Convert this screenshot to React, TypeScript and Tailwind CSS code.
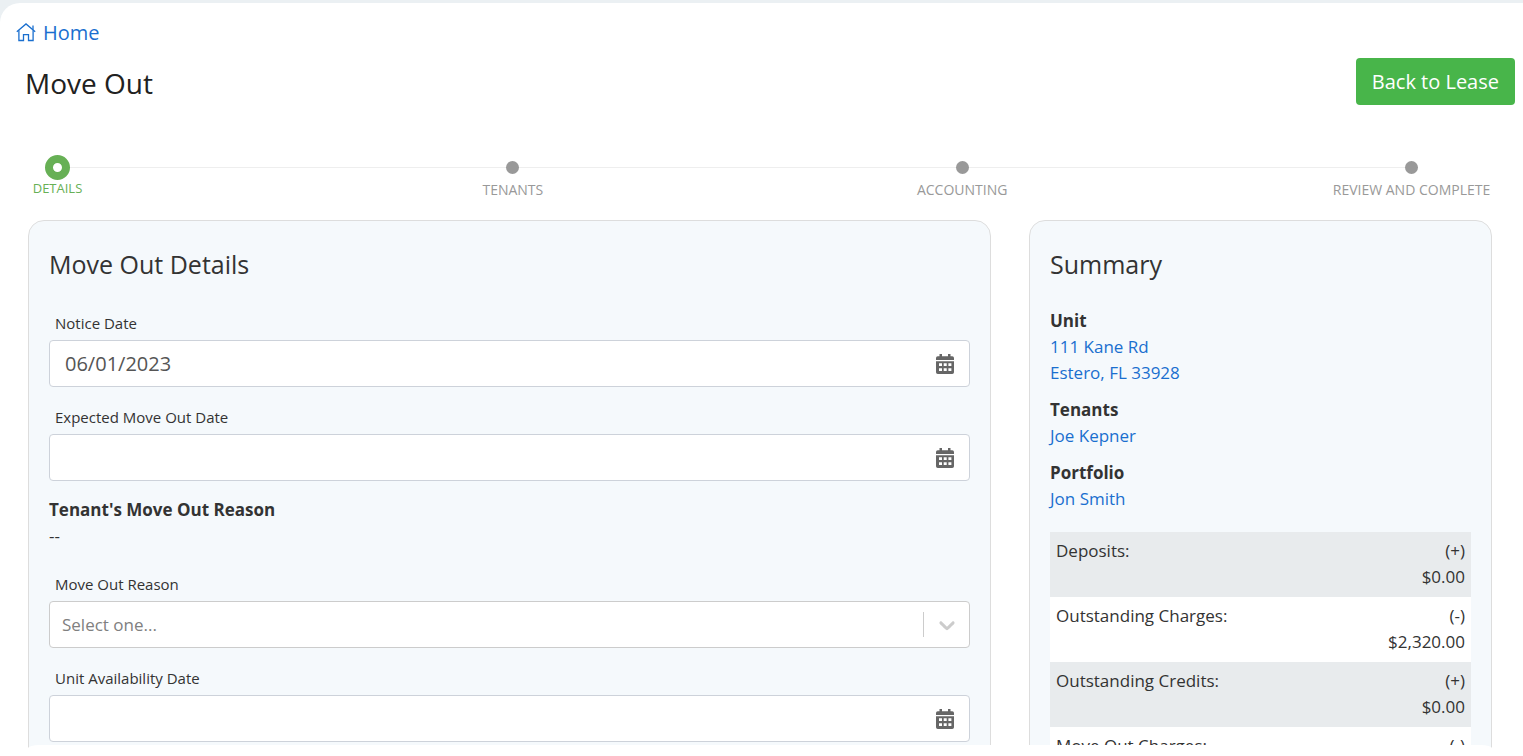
import { FC, Fragment, ReactNode } from "react";

interface FieldProps {
  id: string;
  label: string;
  value?: string;
}

interface ItemProps {
  title: string;
  children: ReactNode;
}

const steps = ["Tenants", "Accounting", "Review and Complete"];

const rows = [
  { label: "Deposits:", sign: "(+)", amount: "$0.00" },
  { label: "Outstanding Charges:", sign: "(-)", amount: "$2,320.00" },
  { label: "Outstanding Credits:", sign: "(+)", amount: "$0.00" },
  { label: "Move Out Charges:", sign: "(-)", amount: "$0.00" },
];

const HomeIcon: FC = () => (
  <svg className="w-5 h-5" viewBox="0 0 20 20" fill="none" stroke="currentColor" strokeWidth="1.3">
    <path d="M0.8 8.7 10 0.9 19.2 8.7" />
    <path d="M17 6.8V2.5" />
    <path d="M2.9 7.2V17.5H7.5V11.6H12.5V17.5H17.1V7.2" />
  </svg>
);

const CalendarIcon: FC = () => (
  <svg className="w-[18px] h-5" viewBox="0 0 18 20" fill="#666">
    <path
      fillRule="evenodd"
      d="M3.5 0H6v2.3h6V0h2.5v2.3h1.7A1.8 1.8 0 0 1 18 4.1V6H0V4.1A1.8 1.8 0 0 1 1.8 2.3h1.7zM0 7.2h18v11a1.8 1.8 0 0 1-1.8 1.8H1.8A1.8 1.8 0 0 1 0 18.2zM3 9.2v2.8h3V9.2zM7.7 9.2v2.8h3V9.2zM12.4 9.2v2.8h3V9.2zM3 14.2v2.8h3v-2.8zM7.7 14.2v2.8h3v-2.8zM12.4 14.2v2.8h3v-2.8z"
    />
  </svg>
);

const Chevron: FC = () => (
  <svg className="w-[26px] h-[26px]" viewBox="0 0 20 20" fill="#ccc">
    <path d="M4.516 7.548c0.436-0.446 1.043-0.481 1.576 0l3.908 3.747 3.908-3.747c0.533-0.481 1.141-0.446 1.574 0 0.436 0.445 0.408 1.197 0 1.615-0.406 0.418-4.695 4.502-4.695 4.502-0.217 0.223-0.502 0.335-0.787 0.335s-0.57-0.112-0.789-0.335c0 0-4.287-4.084-4.695-4.502s-0.436-1.17 0-1.615z" />
  </svg>
);

const Label: FC<{ htmlFor: string; children: ReactNode }> = ({ htmlFor, children }) => (
  <label htmlFor={htmlFor} className="block pl-1.5 mb-0.5 text-[15px] leading-[30px]">
    {children}
  </label>
);

const DateField: FC<FieldProps> = ({ id, label, value }) => (
  <div>
    <Label htmlFor={id}>{label}</Label>
    <div className="flex items-center h-[47px] pr-[15px] bg-white border border-[#cdd2da] rounded">
      <input
        id={id}
        defaultValue={value}
        className="flex-1 min-w-0 h-full pl-[15px] text-xl text-[#555] outline-none"
      />
      <button type="button" aria-label={label + " calendar"}>
        <CalendarIcon />
      </button>
    </div>
  </div>
);

const SummaryItem: FC<ItemProps> = ({ title, children }) => (
  <div>
    <h3 className="font-bold">{title}</h3>
    {children}
  </div>
);

const TextLink: FC<{ children: ReactNode }> = ({ children }) => (
  <a href="#" className="block text-[#1a6fcf]">
    {children}
  </a>
);

const Stepper: FC = () => (
  <ol className="flex items-start h-[65px] pl-[45px] pr-[105px] text-sm uppercase text-[#999] whitespace-nowrap">
    <li className="flex flex-col items-center w-[25px] text-[13px] text-[#67b055]">
      <span className="w-[25px] h-[25px] border-8 border-[#67b055] rounded-full" />
      <span className="leading-4">Details</span>
    </li>
    {steps.map((step) => (
      <Fragment key={step}>
        <li aria-hidden="true" className="flex-1 h-px mt-3 bg-[#eee]" />
        <li className="flex flex-col items-center w-[13px]">
          <span className="flex items-center h-[25px]">
            <span className="w-[13px] h-[13px] bg-[#999] rounded-full" />
          </span>
          <span className="leading-5">{step}</span>
        </li>
      </Fragment>
    ))}
  </ol>
);

const App: FC = () => {
  return (
    <div className="flex flex-col h-screen overflow-hidden bg-[#ebf0f3] pt-[3px] font-['Open_Sans',sans-serif] text-[#333]">
      <main className="flex-1 min-h-0 overflow-hidden bg-white rounded-tl-[20px]">
        <nav className="px-4 pt-[15px]">
          <a href="#" className="inline-flex items-center gap-[7px] text-xl leading-[30px] text-[#1a6fcf]">
            <HomeIcon />
            Home
          </a>
        </nav>
        <header className="flex items-center justify-between pl-[25px] pr-2 pt-[9px] pb-[50px]">
          <h1 className="pt-0.5 text-[28px] text-[#212121]">Move Out</h1>
          <button type="button" className="h-[47px] px-4 text-xl text-white bg-[#48b54a] rounded">
            Back to Lease
          </button>
        </header>

        <Stepper />

        <div className="grid grid-cols-[963fr_463fr] gap-[38px] pl-7 pr-[31px]">
          <section className="px-5 pt-[27px] pb-8 bg-[#f5f9fc] border border-[#ddd] rounded-2xl">
            <h2 className="mb-7 text-[25px] leading-8">Move Out Details</h2>
            <form className="flex flex-col gap-[15px]">
              <DateField id="notice" label="Notice Date" value="06/01/2023" />
              <DateField id="expected" label="Expected Move Out Date" />
              <div className="pt-px pb-[5px] text-[17px] leading-[26px]">
                <h3 className="font-bold">Tenant's Move Out Reason</h3>
                <p>--</p>
              </div>
              <div>
                <Label htmlFor="reason">Move Out Reason</Label>
                <div className="relative">
                  <select
                    id="reason"
                    className="w-full h-[47px] px-3 text-[17px] text-[#808080] bg-white border border-[#ccc] rounded appearance-none"
                  >
                    <option>Select one...</option>
                  </select>
                  <div className="absolute inset-y-0 right-0 flex items-center gap-2.5 pr-2.5 pointer-events-none">
                    <span className="w-px h-[25px] bg-[#ccc]" />
                    <Chevron />
                  </div>
                </div>
              </div>
              <DateField id="availability" label="Unit Availability Date" />
            </form>
          </section>

          <section className="px-5 pt-[27px] pb-8 bg-[#f5f9fc] border border-[#ddd] rounded-2xl text-[17px] leading-[26px]">
            <h2 className="mb-7 text-[25px] leading-8">Summary</h2>
            <div className="flex flex-col gap-[11px] mb-5">
              <SummaryItem title="Unit">
                <TextLink>111 Kane Rd</TextLink>
                <TextLink>Estero, FL 33928</TextLink>
              </SummaryItem>
              <SummaryItem title="Tenants">
                <TextLink>Joe Kepner</TextLink>
              </SummaryItem>
              <SummaryItem title="Portfolio">
                <TextLink>Jon Smith</TextLink>
              </SummaryItem>
            </div>
            <table className="w-full">
              <tbody>
                {rows.map((row) => (
                  <tr key={row.label} className="align-top odd:bg-[#e8ebed] even:bg-white">
                    <th scope="row" className="px-1.5 pt-1.5 font-normal text-left">
                      {row.label}
                    </th>
                    <td className="px-1.5 pt-1.5 pb-[7px] text-right">
                      <p>{row.sign}</p>
                      <p>{row.amount}</p>
                    </td>
                  </tr>
                ))}
              </tbody>
            </table>
          </section>
        </div>
      </main>
      <footer className="h-2 bg-white">
        <div className="relative h-[11px] ml-7 mr-[31px] -mt-[3px] bg-white rounded-tl-[12px_3px] rounded-tr-[12px_3px]" />
      </footer>
    </div>
  );
};

export default App;
